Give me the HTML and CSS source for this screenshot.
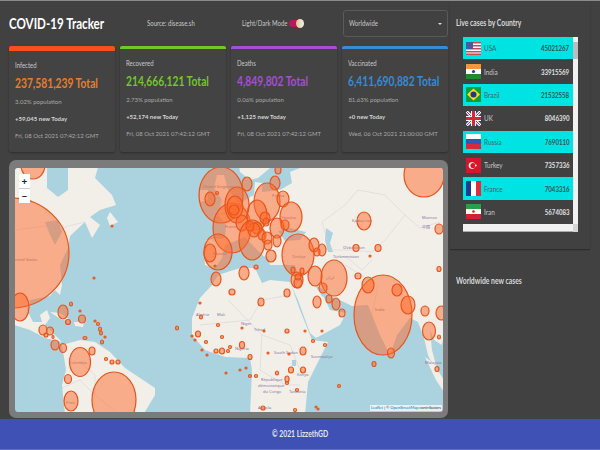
FILE: index.html
```html
<!DOCTYPE html>
<html lang="en">
<head>
    <meta charset="UTF-8">
    <title>COVID-19 Tracker</title>
    <link rel="stylesheet" href="styles.css">
</head>
<body>
    <div class="main">
        <div class="left">
            <header class="top">
                <h1>COVID-19 Tracker</h1>
                <span class="source">Source: disease.sh</span>
                <span class="mode">Light/Dark Mode</span>
                <span class="toggle"><i></i></span>
                <div class="select"><span>Worldwide</span><b></b></div>
            </header>

            <div class="cards">
                <div class="card infected">
                    <p class="label">Infected</p>
                    <p class="total">237,581,239 Total</p>
                    <p class="small">3.02% population</p>
                    <p class="small today">+59,045 new Today</p>
                    <p class="small">Fri, 08 Oct 2021 07:42:12 GMT</p>
                </div>
                <div class="card recovered">
                    <p class="label">Recovered</p>
                    <p class="total">214,666,121 Total</p>
                    <p class="small">2.73% population</p>
                    <p class="small today">+52,174 new Today</p>
                    <p class="small">Fri, 08 Oct 2021 07:42:12 GMT</p>
                </div>
                <div class="card deaths">
                    <p class="label">Deaths</p>
                    <p class="total">4,849,802 Total</p>
                    <p class="small">0.06% population</p>
                    <p class="small today">+1,125 new Today</p>
                    <p class="small">Fri, 08 Oct 2021 07:42:12 GMT</p>
                </div>
                <div class="card vaccinated">
                    <p class="label">Vaccinated</p>
                    <p class="total">6,411,690,882 Total</p>
                    <p class="small">81.63% population</p>
                    <p class="small today">+0 new Today</p>
                    <p class="small">Wed, 06 Oct 2021 21:00:00 GMT</p>
                </div>
            </div>

            <div class="map-box">
                <div class="map">
                    <svg class="map-svg" viewBox="15 168 428 244" width="428" height="244">
                        <!-- land -->
                        <g class="land">
                            <polygon points="5,160 100,160 95,178 112,195 116,205 100,210 90,217 100,225 92,238 85,222 70,236 68,248 60,265 62,285 60,295 55,290 50,296 30,300 27,310 33,322 42,322 40,315 47,310 50,318 45,325 55,335 62,342 45,338 30,330 5,322"/>
                            <polygon points="110,212 118,222 110,226 107,218"/>
                            <polygon points="50,312 60,313 72,321 62,320"/>
                            <polygon points="74,322 84,322 83,327 75,326"/>
                            <polygon points="62,345 80,340 95,342 110,352 125,368 155,388 155,395 143,415 65,415 62,385 66,370"/>
                            <polygon points="290,160 450,160 450,300 442,345 434,340 430,330 432,350 436,365 441,378 436,372 428,355 424,338 418,322 410,318 397,335 390,355 380,335 372,315 368,305 352,306 340,300 322,293 330,310 346,313 340,325 316,338 310,333 298,300 291,285 290,278 297,272 295,265 270,265 267,255 272,245 270,262 262,250 250,230 262,248 268,258 262,255 245,237 238,240 225,245 222,258 215,268 205,265 204,250 206,240 225,238 226,225 218,215 235,212 245,200 254,195 255,182 262,183 262,192 280,190 292,183 290,172 300,168"/>
                            <polygon points="238,160 285,160 270,168 258,178 250,180 240,172"/>
                            <polygon points="217,175 224,175 228,190 238,203 232,212 218,214 222,200 214,188"/>
                            <polygon points="200,190 208,190 208,200 200,202"/>
                            <polygon points="290,282 270,280 262,283 255,268 240,268 218,275 212,285 200,298 192,318 192,335 205,350 225,357 250,358 252,370 250,415 305,415 308,382 328,342 312,340 300,310"/>
                            <polygon points="425,357 432,362 444,380 444,392 436,380"/>
                        </g>
                        <!-- inland water -->
                        <g class="water">
                            <polygon points="47,165 68,165 68,190 58,197 47,188"/>
                            <polygon points="45,222 58,220 62,232 55,245 50,235"/>
                            <polygon points="278,231 290,228 306,232 300,240 285,241"/>
                            <polygon points="326,228 333,233 330,243 333,252 328,252 325,240"/>
                            <polygon points="314,284 324,290 330,300 322,296"/>
                            <polygon points="292,360 296,360 296,366 292,366"/>
                        </g>
                        <!-- borders -->
                        <g class="borders">
                            <polyline points="15,230 45,226 55,232"/>
                            <polyline points="55,232 68,226 85,222"/>
                            <polyline points="322,222 345,205 358,190 385,195 405,215 420,228 440,222"/>
                            <polyline points="322,222 330,250 350,250 372,252 385,240 405,215"/>
                            <polyline points="345,256 362,270 372,260"/>
                            <polyline points="200,325 250,320 262,300 290,295"/>
                            <polyline points="228,300 262,335 290,345 300,370"/>
                            <polyline points="262,335 260,370 285,385 300,385"/>
                            <polyline points="80,362 95,375 95,395 115,411"/>
                            <polyline points="62,388 80,380 95,395"/>
                            <polyline points="345,265 378,285 372,315"/>
                        </g>
                        <!-- place names -->
                        <g class="names">
                            <text x="15" y="261">nited States</text>
                            <text x="203" y="188">United Kingdom</text>
                            <text x="225" y="228">France</text>
                            <text x="213" y="255">España</text>
                            <text x="272" y="197">Polska</text>
                            <text x="281" y="219">Україна</text>
                            <text x="292" y="258">Türkiye</text>
                            <text x="352" y="222">Қазақстан</text>
                            <text x="343" y="249">Oʻzbekiston</text>
                            <text x="333" y="258">Türkmenistan</text>
                            <text x="422" y="219">Монгол</text>
                            <text x="422" y="229">中国</text>
                            <text x="326" y="279">ایران</text>
                            <text x="375" y="311">India</text>
                            <text x="69" y="364">Colombia</text>
                            <text x="66" y="404">Perú</text>
                            <text x="196" y="316">Algérie</text>
                            <text x="217" y="316">Mali</text>
                            <text x="241" y="325">Niger</text>
                            <text x="254" y="331">Tchad</text>
                            <text x="235" y="350">Nigeria</text>
                            <text x="274" y="354">South Sudan</text>
                            <text x="311" y="358">Soomaaliya</text>
                            <text x="297" y="376">Kenya</text>
                            <text x="289" y="393">Tanzania</text>
                            <text x="261" y="381">République</text>
                            <text x="258" y="387">démocratique</text>
                            <text x="263" y="393">du Congo</text>
                            <text x="258" y="409">Angola</text>
                            <text x="425" y="364">Malaysia</text>
                        </g>
                        <!-- case circles -->
                        <g class="cases">
                            <ellipse cx="11" cy="253" rx="58" ry="55"/>
                            <ellipse cx="33" cy="165" rx="12" ry="14"/>
                            <ellipse cx="20" cy="307" rx="9" ry="14"/>
                            <ellipse cx="63" cy="312" rx="5" ry="7"/>
                            <ellipse cx="71" cy="304" rx="1.5" ry="2"/>
                            <ellipse cx="68" cy="322" rx="2.5" ry="2.5"/>
                            <ellipse cx="82" cy="319" rx="3.5" ry="4"/>
                            <ellipse cx="43" cy="330" rx="4" ry="5"/>
                            <ellipse cx="50" cy="331" rx="3.5" ry="4"/>
                            <ellipse cx="46" cy="335" rx="2" ry="2"/>
                            <ellipse cx="53" cy="337" rx="1" ry="1.5"/>
                            <ellipse cx="55" cy="345" rx="4" ry="5"/>
                            <ellipse cx="63" cy="348" rx="3.5" ry="4.5"/>
                            <ellipse cx="80" cy="362" rx="10.5" ry="14.5"/>
                            <ellipse cx="92" cy="351" rx="3" ry="4"/>
                            <ellipse cx="68" cy="379" rx="3.5" ry="4.5"/>
                            <ellipse cx="71" cy="401" rx="7" ry="10"/>
                            <ellipse cx="114" cy="400" rx="22" ry="28"/>
                            <ellipse cx="106" cy="359" rx="1.5" ry="1.5"/>
                            <ellipse cx="112" cy="362" rx="2" ry="2"/>
                            <ellipse cx="118" cy="362" rx="2" ry="2"/>
                            <ellipse cx="95" cy="321" rx="1" ry="1"/>
                            <ellipse cx="98" cy="324" rx="1.5" ry="1.5"/>
                            <ellipse cx="100" cy="329" rx="1.5" ry="2"/>
                            <ellipse cx="101" cy="333" rx="1.5" ry="2"/>
                            <ellipse cx="102" cy="342" rx="1.5" ry="2"/>
                            <ellipse cx="85" cy="338" rx="2" ry="1.5"/>
                            <ellipse cx="105" cy="337" rx="1" ry="1"/>
                            <ellipse cx="80" cy="311" rx="1" ry="1"/>
                            <ellipse cx="177" cy="328" rx="1.5" ry="2"/>
                            <ellipse cx="201" cy="317" rx="1.5" ry="2"/>
                            <ellipse cx="200" cy="303" rx="1" ry="1"/>
                            <ellipse cx="218" cy="325" rx="1.5" ry="1.5"/>
                            <ellipse cx="198" cy="334" rx="2.5" ry="3"/>
                            <ellipse cx="192" cy="336" rx="1" ry="1"/>
                            <ellipse cx="195" cy="340" rx="1" ry="1"/>
                            <ellipse cx="206" cy="342" rx="1.5" ry="1.5"/>
                            <ellipse cx="222" cy="337" rx="1.5" ry="1.5"/>
                            <ellipse cx="202" cy="350" rx="1" ry="1"/>
                            <ellipse cx="216" cy="351" rx="2" ry="2"/>
                            <ellipse cx="222" cy="351" rx="2.5" ry="3"/>
                            <ellipse cx="228" cy="351" rx="1.5" ry="1.5"/>
                            <ellipse cx="207" cy="355" rx="1" ry="1"/>
                            <ellipse cx="226" cy="373" rx="1" ry="1"/>
                            <ellipse cx="112" cy="226" rx="1" ry="1"/>
                            <ellipse cx="94" cy="278" rx="1" ry="1"/>

                            <ellipse cx="221" cy="195" rx="22" ry="28"/>
                            <ellipse cx="210" cy="199" rx="5" ry="7"/>
                            <ellipse cx="217" cy="193" rx="1.5" ry="1.5"/>
                            <ellipse cx="232" cy="228" rx="19" ry="25"/>
                            <ellipse cx="218" cy="252" rx="14" ry="18"/>
                            <ellipse cx="210" cy="253" rx="6" ry="9"/>
                            <ellipse cx="215" cy="266" rx="1" ry="1"/>
                            <ellipse cx="216" cy="279" rx="5" ry="7"/>
                            <ellipse cx="247" cy="184" rx="5" ry="7"/>
                            <ellipse cx="278" cy="170" rx="3" ry="4"/>
                            <ellipse cx="275" cy="183" rx="5" ry="7"/>
                            <ellipse cx="267" cy="202" rx="13" ry="19"/>
                            <ellipse cx="283" cy="199" rx="6" ry="8"/>
                            <ellipse cx="291" cy="217" rx="11" ry="15"/>
                            <ellipse cx="277" cy="228" rx="7" ry="10"/>
                            <ellipse cx="257" cy="215" rx="10" ry="15"/>
                            <ellipse cx="237" cy="205" rx="12" ry="18"/>
                            <ellipse cx="235" cy="207" rx="8" ry="11"/>
                            <ellipse cx="234" cy="210" rx="5" ry="5"/>
                            <ellipse cx="242" cy="223" rx="6" ry="8"/>
                            <ellipse cx="252" cy="240" rx="13" ry="20"/>
                            <ellipse cx="257" cy="228" rx="5" ry="6"/>
                            <ellipse cx="254" cy="230" rx="6" ry="7"/>
                            <ellipse cx="250" cy="226" rx="4" ry="5"/>
                            <ellipse cx="262" cy="235" rx="4" ry="5"/>
                            <ellipse cx="265" cy="218" rx="5" ry="6"/>
                            <ellipse cx="266" cy="222" rx="3" ry="4"/>
                            <ellipse cx="267" cy="238" rx="5" ry="6"/>
                            <ellipse cx="268" cy="245" rx="4" ry="5"/>
                            <ellipse cx="277" cy="241" rx="4" ry="6"/>
                            <ellipse cx="271" cy="256" rx="5" ry="6"/>
                            <ellipse cx="285" cy="225" rx="4" ry="5"/>
                            <ellipse cx="244" cy="273" rx="5" ry="7"/>
                            <ellipse cx="256" cy="267" rx="2" ry="2"/>
                            <ellipse cx="298" cy="255" rx="16" ry="21"/>
                            <ellipse cx="314" cy="245" rx="5" ry="7"/>
                            <ellipse cx="322" cy="250" rx="4" ry="6"/>
                            <ellipse cx="317" cy="252" rx="3" ry="4"/>
                            <ellipse cx="364" cy="221" rx="7" ry="9"/>
                            <ellipse cx="356" cy="248" rx="3" ry="3.5"/>
                            <ellipse cx="378" cy="248" rx="3" ry="3.5"/>
                            <ellipse cx="370" cy="256" rx="1" ry="1"/>
                            <ellipse cx="358" cy="276" rx="3" ry="3"/>
                            <ellipse cx="334" cy="278" rx="13" ry="18"/>
                            <ellipse cx="315" cy="276" rx="7" ry="10"/>
                            <ellipse cx="297" cy="280" rx="6" ry="8"/>
                            <ellipse cx="298" cy="283" rx="4" ry="5"/>
                            <ellipse cx="298" cy="277" rx="3" ry="3"/>
                            <ellipse cx="293" cy="270" rx="2" ry="3"/>
                            <ellipse cx="302" cy="271" rx="2" ry="3"/>
                            <ellipse cx="323" cy="288" rx="4" ry="5"/>
                            <ellipse cx="287" cy="293" rx="3" ry="4"/>
                            <ellipse cx="232" cy="292" rx="3" ry="3"/>
                            <ellipse cx="424" cy="175" rx="20" ry="22"/>
                            <ellipse cx="439" cy="229" rx="4" ry="5"/>
                            <ellipse cx="439" cy="269" rx="2" ry="2.5"/>

                            <ellipse cx="383" cy="315" rx="29" ry="40"/>
                            <ellipse cx="368" cy="285" rx="6" ry="8"/>
                            <ellipse cx="397" cy="290" rx="5" ry="6"/>
                            <ellipse cx="408" cy="305" rx="7" ry="9"/>
                            <ellipse cx="425" cy="311" rx="4" ry="5"/>
                            <ellipse cx="441" cy="313" rx="5" ry="7"/>
                            <ellipse cx="429" cy="331" rx="6.5" ry="9"/>
                            <ellipse cx="439" cy="337" rx="1.5" ry="2"/>
                            <ellipse cx="391" cy="353" rx="3.5" ry="5"/>
                            <ellipse cx="374" cy="364" rx="2" ry="2.5"/>
                            <ellipse cx="437" cy="369" rx="2" ry="2.5"/>
                            <ellipse cx="261" cy="302" rx="3" ry="4"/>
                            <ellipse cx="317" cy="302" rx="4" ry="6"/>
                            <ellipse cx="329" cy="299" rx="3" ry="4"/>
                            <ellipse cx="336" cy="304" rx="4" ry="6"/>
                            <ellipse cx="342" cy="313" rx="3" ry="4"/>
                            <ellipse cx="242" cy="345" rx="2.5" ry="3.5"/>
                            <ellipse cx="250" cy="357" rx="2" ry="2.5"/>
                            <ellipse cx="287" cy="331" rx="2" ry="2"/>
                            <ellipse cx="264" cy="331" rx="1" ry="1"/>
                            <ellipse cx="242" cy="328" rx="1" ry="1"/>
                            <ellipse cx="305" cy="331" rx="1" ry="1"/>
                            <ellipse cx="313" cy="341" rx="1.5" ry="1.5"/>
                            <ellipse cx="325" cy="345" rx="1.5" ry="1.5"/>
                            <ellipse cx="303" cy="351" rx="3" ry="4"/>
                            <ellipse cx="268" cy="353" rx="1" ry="1"/>
                            <ellipse cx="289" cy="354" rx="1" ry="1"/>
                            <ellipse cx="230" cy="347" rx="1.5" ry="1.5"/>
                            <ellipse cx="291" cy="370" rx="2.5" ry="3"/>
                            <ellipse cx="303" cy="370" rx="2.5" ry="3"/>
                            <ellipse cx="277" cy="373" rx="1.5" ry="2"/>
                            <ellipse cx="287" cy="379" rx="2" ry="3"/>
                            <ellipse cx="287" cy="383" rx="1.5" ry="1.5"/>
                            <ellipse cx="240" cy="370" rx="1" ry="1"/>
                            <ellipse cx="246" cy="368" rx="1" ry="1"/>
                            <ellipse cx="250" cy="376" rx="1.5" ry="1.5"/>
                            <ellipse cx="256" cy="376" rx="1.5" ry="1.5"/>
                            <ellipse cx="297" cy="390" rx="1.5" ry="1.5"/>
                            <ellipse cx="339" cy="386" rx="1.5" ry="1.5"/>
                            <ellipse cx="263" cy="408" rx="2" ry="2"/>
                            <ellipse cx="295" cy="410" rx="1.5" ry="1.5"/>
                            <ellipse cx="316" cy="407" rx="1" ry="1"/>
                            <ellipse cx="318" cy="409" rx="1" ry="1"/>
                            <ellipse cx="322" cy="331" rx="1" ry="1"/>
                        </g>
                    </svg>
                    <div class="zoom-ctl">
                        <span>+</span>
                        <span>−</span>
                    </div>
                    <div class="attrib"><a>Leaflet</a> | © <a>OpenStreetMap</a> contributors</div>
                </div>
            </div>
        </div>

        <aside class="right">
            <div class="panel live">
                <h3>Live cases by Country</h3>
                <div class="list-wrap">
                    <div class="list">
                        <div class="row">
                            <svg class="flag" viewBox="0 0 15 15"><rect y="1" width="15" height="13" fill="#fff"/><path d="M0 1h15v1.500H0zM0 4h15v1.500H0zM0 7h15v1.500H0zM0 10h15v1.500H0zM0 12.500h15V14H0z" fill="#c9485b"/><rect y="1" width="7" height="7" fill="#4a5a9c"/></svg>
                            <span class="name">USA</span><span class="num">45021267</span>
                        </div>
                        <div class="row">
                            <svg class="flag" viewBox="0 0 15 15"><rect y="0" width="15" height="5" fill="#f4993a"/><rect y="5" width="15" height="5" fill="#fff"/><rect y="10" width="15" height="5" fill="#1f8a34"/><circle cx="7.500" cy="7.500" r="1.600" fill="#34408a"/></svg>
                            <span class="name">India</span><span class="num">33915569</span>
                        </div>
                        <div class="row">
                            <svg class="flag" viewBox="0 0 15 15"><rect width="15" height="15" fill="#169b3a"/><path d="M7.500 1.500 14 7.500 7.500 13.500 1 7.500z" fill="#fbdc1e"/><circle cx="7.500" cy="7.500" r="3" fill="#1f3a83"/></svg>
                            <span class="name">Brazil</span><span class="num">21532558</span>
                        </div>
                        <div class="row">
                            <svg class="flag" viewBox="0 0 15 15"><rect y="0" width="15" height="15" fill="#33418c"/><path d="M0 0 15 15M15 0 0 15" stroke="#fff" stroke-width="3"/><path d="M0 0 15 15M15 0 0 15" stroke="#cf2b3f" stroke-width="1"/><path d="M7.500 0v15M0 7.500h15" stroke="#fff" stroke-width="5"/><path d="M7.500 0v15M0 7.500h15" stroke="#cf2b3f" stroke-width="3"/></svg>
                            <span class="name">UK</span><span class="num">8046390</span>
                        </div>
                        <div class="row">
                            <svg class="flag" viewBox="0 0 15 15"><rect width="15" height="5" fill="#fff"/><rect y="5" width="15" height="5" fill="#3557b0"/><rect y="10" width="15" height="5" fill="#d52b3c"/></svg>
                            <span class="name">Russia</span><span class="num">7690110</span>
                        </div>
                        <div class="row">
                            <svg class="flag" viewBox="0 0 15 15"><rect width="15" height="15" fill="#d8152a"/><circle cx="6" cy="7.500" r="3.300" fill="#fff"/><circle cx="7" cy="7.500" r="2.600" fill="#d8152a"/><circle cx="9.800" cy="7.500" r="1" fill="#fff"/></svg>
                            <span class="name">Turkey</span><span class="num">7357336</span>
                        </div>
                        <div class="row">
                            <svg class="flag" viewBox="0 0 15 15"><rect width="5" height="15" fill="#1f3a8f"/><rect x="5" width="5" height="15" fill="#fff"/><rect x="10" width="5" height="15" fill="#e02b3c"/></svg>
                            <span class="name">France</span><span class="num">7043316</span>
                        </div>
                        <div class="row">
                            <svg class="flag" viewBox="0 0 15 15"><rect width="15" height="5" fill="#27a04a"/><rect y="5" width="15" height="5" fill="#fff"/><rect y="10" width="15" height="5" fill="#d5202f"/><circle cx="7.500" cy="7.500" r="1.300" fill="#d5202f"/></svg>
                            <span class="name">Iran</span><span class="num">5674083</span>
                        </div>
                    </div>
                    <div class="vbar"><i></i></div>
                    <div class="hbar"></div>
                    <div class="corner"></div>
                </div>
            </div>
            <div class="panel">
                <h3>Worldwide new cases</h3>
            </div>
        </aside>
    </div>

    <footer class="foot"><span>© 2021 LizzethGD</span></footer>
</body>
</html>
```

FILE: styles.css
```css
* {
    margin: 0;
    padding: 0;
    box-sizing: border-box;
}

body {
    width: 600px;
    height: 450px;
    overflow: hidden;
    display: flex;
    flex-direction: column;
    background-color: #414141;
    border-top: 1px solid #8a8a8a;
    font-family: Lato, 'Noto Sans', sans-serif;
    color: #c8c8c8;
}

.main {
    flex: 1;
    display: flex;
    min-height: 0;
}

.left {
    width: 450px;
    padding: 9px 2px 0 9px;
    display: flex;
    flex-direction: column;
}

/* the screenshot is squeezed sideways, so the text is too */
.top h1,
.source,
.mode,
.select span,
.label,
.total,
.panel h3,
.name {
    transform: scaleX(0.8);
    transform-origin: left center;
}

/* header row */
.top {
    height: 27px;
    display: flex;
    align-items: center;
}

.top h1 {
    flex: none;
    width: 138px;
    font-size: 14.500px;
    font-weight: 700;
    color: #fff;
    white-space: nowrap;
}

.source {
    flex: none;
    width: 95px;
    font-size: 7.500px;
    white-space: nowrap;
}

.mode {
    flex: none;
    width: 47px;
    font-size: 7.500px;
    white-space: nowrap;
}

.toggle {
    flex: none;
    width: 14px;
    height: 7px;
    margin-right: 40px;
    background-color: #b8195a;
    border-radius: 4px;
    position: relative;
}

.toggle i {
    position: absolute;
    top: -1px;
    right: -1px;
    width: 8px;
    height: 9px;
    border-radius: 50%;
    background: linear-gradient(90deg, #d8c98f, #f2f2f2);
}

.select {
    flex: none;
    width: 105px;
    height: 27px;
    padding: 0 5px;
    display: flex;
    align-items: center;
    justify-content: space-between;
    border: 1px solid #5a5a5a;
    border-radius: 3px;
    font-size: 7.500px;
}

.select b {
    border-left: 2px solid transparent;
    border-right: 2px solid transparent;
    border-top: 2.500px solid #ddd;
}

/* stat cards */
.cards {
    display: grid;
    grid-template-columns: repeat(4, minmax(0, 1fr));
    column-gap: 5.500px;
    margin-top: 9px;
    height: 106px;
}

.card {
    padding: 10px 6px 0 6px;
    border-top: 3px solid;
    border-radius: 2px;
    background-color: #434343;
    box-shadow: 0 1px 2px rgba(0, 0, 0, 0.3);
}

.card.infected {
    border-top: 5.500px solid #f4511e;
}

.card.infected .total { color: #e67e2e; }
.card.recovered { border-color: #76c52c; }
.card.recovered .total { color: #76c52c; }
.card.deaths { border-color: #a44fd6; }
.card.deaths .total { color: #a44fd6; }
.card.vaccinated { border-color: #3a8ad4; }
.card.vaccinated .total { color: #3a8ad4; }

.label {
    font-size: 7.500px;
    line-height: 10px;
}

.total {
    margin-top: 4px;
    font-size: 13px;
    font-weight: 700;
    line-height: 16px;
    white-space: nowrap;
    transform: scaleX(0.79);
}

.small {
    margin-top: 9px;
    font-size: 6px;
    line-height: 8px;
    color: #a8a8a8;
    white-space: nowrap;
}

.total + .small {
    margin-top: 7px;
}

.small.today {
    font-weight: 700;
    color: #d4d4d4;
}

/* map */
.map-box {
    margin-top: 8px;
    height: 258px;
    padding: 8px 5px 6px 6px;
    background-color: #7b7b7b;
    border-radius: 7px;
}

.map {
    position: relative;
    height: 100%;
    overflow: hidden;
    background-color: #aad3df;
    border-radius: 3px;
}

.map-svg {
    display: block;
}

.land { fill: #f2efe9; }
.water { fill: #aad3df; }

.borders {
    fill: none;
    stroke: #d4ccd6;
    stroke-width: 0.500;
}

.names {
    font-family: 'Noto Sans', 'Noto Sans CJK SC', sans-serif;
    font-size: 4px;
    fill: #86749a;
}

.cases ellipse {
    fill: #ff6a2a;
    fill-opacity: 0.5;
    stroke: #e8541c;
    stroke-width: 1.200;
}

.zoom-ctl {
    position: absolute;
    top: 6px;
    left: 4px;
    width: 11px;
    display: flex;
    flex-direction: column;
    gap: 1px;
    background-color: #ccc;
    border-radius: 2px;
}

.zoom-ctl span {
    height: 14px;
    background-color: #fff;
    color: #222;
    font-size: 10px;
    font-weight: 700;
    line-height: 14px;
    text-align: center;
}

.attrib {
    position: absolute;
    right: 1px;
    bottom: 1px;
    padding: 0 1px;
    background-color: rgba(255, 255, 255, 0.7);
    font-size: 4px;
    line-height: 6px;
    color: #333;
}

.attrib a {
    color: #0078a8;
}

/* right column */
.right {
    width: 150px;
    padding-right: 10px;
    display: flex;
    flex-direction: column;
}

.panel {
    padding: 16px 6px 0 6px;
}

.panel h3 {
    font-size: 8.500px;
    font-weight: 700;
    line-height: 12px;
    color: #d8d8d8;
    white-space: nowrap;
}

.panel.live {
    height: 248px;
    box-shadow: 0 1px 1px rgba(0, 0, 0, 0.3);
}

.panel + .panel {
    padding-top: 26px;
}

.list-wrap {
    margin: 8px 0 0 7px;
    width: 115px;
    display: grid;
    grid-template-columns: 110px 5px;
    grid-template-rows: 187px 8px;
}

.list {
    display: flex;
    flex-direction: column;
    gap: 1px;
}

.row {
    height: 22.400px;
    padding: 0 4px 0 3px;
    display: flex;
    align-items: center;
    font-size: 8px;
}

.row:nth-child(odd) {
    background-color: #00e3e3;
    color: #3f6668;
}

.row:nth-child(odd) .num {
    color: #2a5456;
}

.flag {
    flex: none;
    width: 15px;
    height: 15px;
    margin-right: 3px;
}

.name {
    flex: 1;
}

.num {
    font-weight: 700;
    color: #e0e0e0;
    transform: scaleX(0.76);
    transform-origin: right center;
}

.vbar {
    background-color: #f1f1f1;
    padding-top: 5px;
}

.vbar i {
    display: block;
    height: 17px;
    background-color: #bdbdbd;
}

.hbar {
    background-color: #f1f1f1;
    border-bottom: 1px solid #aaa;
}

.corner {
    background-color: #d4d4d4;
}

/* footer */
.foot {
    height: 31px;
    flex-shrink: 0;
    background-color: #3f51b5;
    border-bottom: 1px solid #5f6fc4;
    color: #e4e4e4;
    font-size: 8.500px;
    font-weight: 700;
    line-height: 30px;
    text-align: center;
}

.foot span {
    display: inline-block;
    transform: scaleX(0.8);
}
```
